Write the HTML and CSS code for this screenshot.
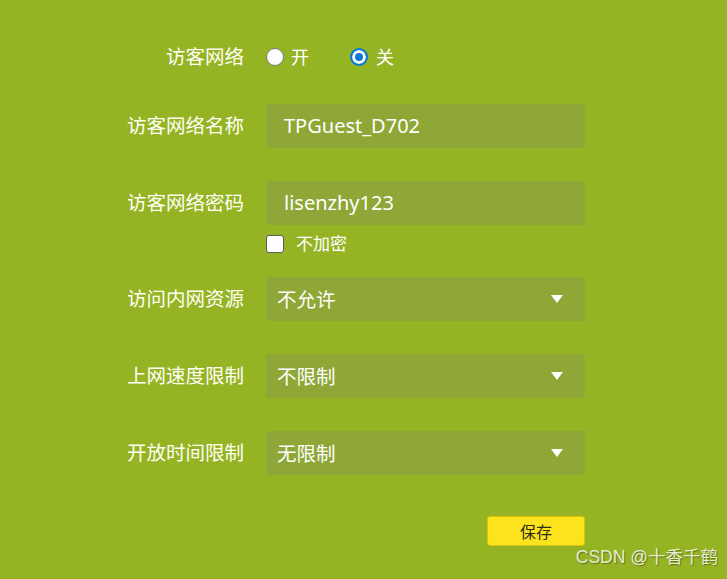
FILE: index.html
```html
<!DOCTYPE html>
<html lang="zh-CN">
<head>
<meta charset="utf-8">
<title>访客网络</title>
<link rel="stylesheet" href="styles.css">
</head>
<body>
<div class="page">
  <div class="form">
    <div class="row row-radio">
      <div class="label">访客网络</div>
      <div class="control radios">
        <span class="opt"><span class="radio"></span><span class="opt-text">开</span></span>
        <span class="opt opt-second"><span class="radio checked"></span><span class="opt-text">关</span></span>
      </div>
    </div>
    <div class="row row-name">
      <div class="label">访客网络名称</div>
      <div class="control"><div class="field input">TPGuest_D702</div></div>
    </div>
    <div class="row row-pass">
      <div class="label">访客网络密码</div>
      <div class="control">
        <div class="field input">lisenzhy123</div>
        <div class="check-line"><span class="checkbox"></span><span class="check-text">不加密</span></div>
      </div>
    </div>
    <div class="row row-sel1">
      <div class="label">访问内网资源</div>
      <div class="control"><div class="field select"><span>不允许</span><span class="arrow"></span></div></div>
    </div>
    <div class="row row-sel">
      <div class="label">上网速度限制</div>
      <div class="control"><div class="field select"><span>不限制</span><span class="arrow"></span></div></div>
    </div>
    <div class="row row-sel">
      <div class="label">开放时间限制</div>
      <div class="control"><div class="field select"><span>无限制</span><span class="arrow"></span></div></div>
    </div>
    <div class="row row-btn">
      <div class="label"></div>
      <div class="control btn-wrap"><button class="save">保存</button></div>
    </div>
  </div>
  <div class="watermark">CSDN @十香千鹤</div>
</div>
</body>
</html>
```

FILE: styles.css
```css
html, body {
  margin: 0;
  padding: 0;
}
body {
  background: #95b424;
  font-family: "Noto Sans", "Noto Sans CJK SC", sans-serif;
  color: #ffffff;
}
.page {
  position: relative;
  width: 727px;
  height: 579px;
  overflow: hidden;
}
.form {
  display: flex;
  flex-direction: column;
  padding-top: 48px;
}
.row {
  display: grid;
  grid-template-columns: 244px 319px;
  column-gap: 22px;
  align-items: start;
}
.label {
  text-align: right;
  font-size: 19.5px;
  line-height: 43px;
  white-space: nowrap;
  color: #fffff4;
}
.row-radio .label {
  line-height: 18px;
}
.row-name { margin-top: 38px; }
.row-pass { margin-top: 33px; }
.row-sel1 { margin-top: 24px; }
.row-sel { margin-top: 33px; }
.row-btn { margin-top: 41px; }

.radios {
  display: flex;
  align-items: center;
  height: 18px;
}
.opt {
  display: flex;
  align-items: center;
}
.opt-second {
  margin-left: 41px;
}
.opt-second .opt-text {
  margin-left: 8px;
}
.opt-text {
  margin-left: 7px;
  font-size: 18px;
  line-height: 18px;
}
.radio {
  box-sizing: border-box;
  width: 18px;
  height: 18px;
  border-radius: 50%;
  background: #ffffff;
  border: 1px solid #7a7a7a;
}
.radio.checked {
  border: 2px solid #0a78d6;
  background: #0a78d6;
  box-shadow: inset 0 0 0 3px #ffffff;
}

.field {
  box-sizing: border-box;
  height: 44px;
  background: #8fa737;
  border-radius: 3px;
  display: flex;
  align-items: center;
}
.input {
  padding-left: 18px;
  font-size: 20px;
  padding-bottom: 1px;
}
.select {
  padding-left: 11px;
  padding-right: 22px;
  font-size: 19.5px;
  justify-content: space-between;
  padding-bottom: 2px;
}
.arrow {
  width: 0;
  height: 0;
  border-left: 6px solid transparent;
  border-right: 6px solid transparent;
  border-top: 8px solid #ffffff;
  margin-top: 1px;
}
.check-line {
  display: flex;
  align-items: center;
  margin-top: 10px;
  height: 18px;
}
.checkbox {
  box-sizing: border-box;
  width: 18px;
  height: 18px;
  background: #ffffff;
  border: 1px solid #5c5c5c;
  border-radius: 3px;
}
.check-text {
  margin-left: 12px;
  font-size: 17px;
  line-height: 18px;
}
.btn-wrap {
  display: flex;
  justify-content: flex-end;
}
.save {
  box-sizing: border-box;
  width: 98px;
  height: 30px;
  background: #fde21e;
  border: 1px solid #dcc00c;
  border-radius: 3px;
  font-family: "Noto Sans CJK SC", sans-serif;
  font-size: 16px;
  color: #2e2e10;
  padding: 0;
}
.watermark {
  position: absolute;
  right: 9px;
  bottom: 11px;
  font-family: "Liberation Sans", "Noto Sans CJK SC", sans-serif;
  font-size: 17.5px;
  color: #e6ecd2;
  text-shadow: 1px 1px 1px rgba(60, 70, 20, 0.6);
}
```
